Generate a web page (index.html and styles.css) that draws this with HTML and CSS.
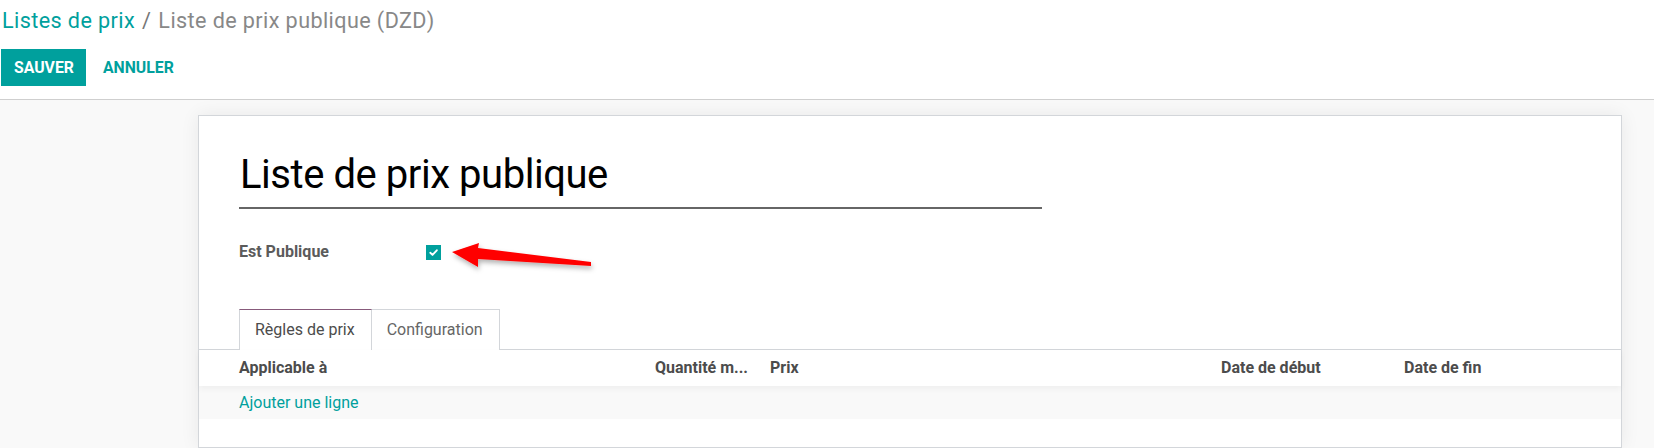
FILE: index.html
```html
<!DOCTYPE html>
<html lang="fr">
<head>
<meta charset="utf-8">
<title>Liste de prix publique</title>
<link rel="stylesheet" href="styles.css">
</head>
<body>
<div class="control-panel">
  <div class="breadcrumb">
    <a class="crumb-link">Listes de prix</a>
    <span class="crumb-sep">/</span>
    <span class="crumb-current">Liste de prix publique (DZD)</span>
  </div>
  <div class="buttons">
    <button class="btn btn-primary">Sauver</button>
    <button class="btn btn-link">Annuler</button>
  </div>
</div>
<div class="content">
  <div class="sheet">
    <div class="title-field">Liste de prix publique</div>
    <div class="field-row">
      <span class="field-label">Est Publique</span>
      <span class="checkbox">
        <svg width="15" height="15" viewBox="0 0 15 15"><path d="M4.3 7.8 L6.5 9.9 L10.8 5.3" fill="none" stroke="#fff" stroke-width="1.9" stroke-linecap="round" stroke-linejoin="round"/></svg>
      </span>
      <svg class="arrow" width="150" height="40" viewBox="0 0 150 40">
        <defs>
          <filter id="sh" x="-20%" y="-50%" width="140%" height="200%">
            <feDropShadow dx="1" dy="3" stdDeviation="2.5" flood-color="#000" flood-opacity="0.3"/>
          </filter>
        </defs>
        <polygon points="4,14 31,5 30,10 143,24 143,28 30,21 30,29" fill="#ff0000" filter="url(#sh)"/>
      </svg>
    </div>
    <div class="tabs">
      <div class="tab active">Règles de prix</div>
      <div class="tab">Configuration</div>
    </div>
    <div class="list">
      <div class="list-head">
        <div class="cell c1">Applicable à</div>
        <div class="cell c2">Quantité m...</div>
        <div class="cell c3">Prix</div>
        <div class="cell c4">Date de début</div>
        <div class="cell c5">Date de fin</div>
      </div>
      <div class="list-add">
        <a class="add-line">Ajouter une ligne</a>
      </div>
    </div>
  </div>
</div>
</body>
</html>
```

FILE: styles.css
```css
html, body {
  margin: 0;
  padding: 0;
  height: 100%;
}
body {
  font-family: Roboto, "Liberation Sans", sans-serif;
  font-size: 16px;
  color: #4c4c4c;
  background: #f9f9f9;
  overflow: hidden;
}
.control-panel {
  background: #fff;
  padding: 7px 0 13px 1px;
  border-bottom: 1px solid #cfcfcf;
}
.breadcrumb {
  font-size: 21.6px;
  letter-spacing: 0.4px;
  line-height: 27px;
  display: flex;
  align-items: baseline;
}
.crumb-link {
  color: #00a09d;
  padding-left: 1px;
}
.crumb-sep {
  color: #777;
  margin: 0 7px 0 7px;
}
.crumb-current {
  color: #888;
}
.buttons {
  display: flex;
  margin-top: 15px;
}
.btn {
  font-family: Roboto, "Liberation Sans", sans-serif;
  font-size: 15.8px;
  font-weight: 700;
  text-transform: uppercase;
  height: 37px;
  padding: 0 12px 0 13px;
  border: 0;
  border-radius: 0;
  cursor: pointer;
  line-height: 37px;
}
.btn-primary {
  background: #00a09d;
  color: #fff;
}
.btn-link {
  background: transparent;
  color: #00a09d;
  margin-left: 4px;
}
.content {
  padding: 15px 32px 0 198px;
  height: calc(100% - 100px);
  box-sizing: border-box;
}
.sheet {
  background: #fff;
  border: 1px solid #d3d6da;
  box-shadow: 0 0 18px rgba(0, 0, 0, 0.07);
  height: 100%;
  box-sizing: border-box;
  padding: 35px 40px 0 40px;
}
.title-field {
  width: 803px;
  font-size: 40px;
  letter-spacing: -0.45px;
  line-height: 47.5px;
  color: #000;
  padding-bottom: 8px;
  border-bottom: 2px solid #666;
  text-indent: 1px;
}
.field-row {
  position: relative;
  display: flex;
  align-items: flex-start;
  height: 18px;
  margin-top: 34px;
}
.field-label {
  width: 187px;
  font-weight: 700;
  line-height: 18px;
  color: #5b5b5b;
}
.checkbox {
  width: 15px;
  height: 15px;
  margin-top: 2px;
  background: #00a09d;
  display: block;
}
.checkbox svg {
  display: block;
}
.arrow {
  position: absolute;
  left: 209px;
  top: -5px;
  overflow: visible;
}
.tabs {
  display: flex;
  margin: 48px -40px 0 -40px;
  padding-left: 40px;
  border-bottom: 1px solid #d3d6da;
}
.tab {
  line-height: 19px;
  padding: 10px 16px 10px 15px;
  border: 1px solid #d3d6da;
  border-bottom: 0;
  color: #666;
  margin-bottom: -1px;
  background: #fff;
}
.tab + .tab {
  border-left: 0;
  padding-bottom: 11px;
}
.tab.active {
  border-top-color: #875a7b;
  color: #4c4c4c;
  padding-bottom: 11px;
}
.list {
  margin: 0 -40px;
}
.list-head {
  display: grid;
  grid-template-columns: 456px 115px 451px 183px 1fr;
  height: 36px;
  line-height: 36px;
  font-weight: 700;
  color: #4c4c4c;
  background: #fff;
  position: relative;
  z-index: 1;
  box-shadow: 0 3px 6px rgba(0, 0, 0, 0.045);
}
.cell {
  white-space: nowrap;
  overflow: hidden;
}
.c1 {
  padding-left: 40px;
}
.list-add {
  height: 33px;
  line-height: 33px;
  background: #f9f9f9;
  padding-left: 40px;
}
.add-line {
  color: #00a09d;
}
```
